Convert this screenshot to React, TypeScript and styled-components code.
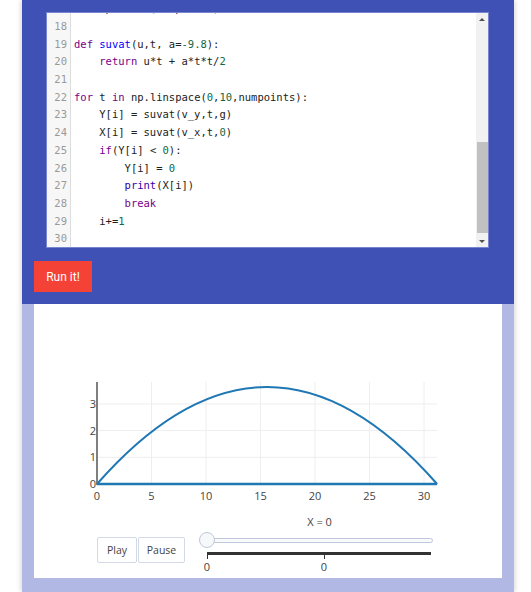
import React from "react";
import styled, { createGlobalStyle } from "styled-components";

const GlobalStyle = createGlobalStyle`
  html, body {
    margin: 0;
    padding: 0;
    background: #ffffff;
  }
  * {
    box-sizing: border-box;
  }
`;

type Token = { t: string; k?: "kw" | "def" | "num" | "builtin" };

// lines 17..30 of the editor; 17 sits half hidden above the top edge
const CODE: { n: number; tokens: Token[] }[] = [
  { n: 17, tokens: [{ t: "Y = np.zeros(numpoints)" }] },
  { n: 18, tokens: [] },
  {
    n: 19,
    tokens: [
      { t: "def", k: "kw" },
      { t: " " },
      { t: "suvat", k: "def" },
      { t: "(u,t, a=" },
      { t: "-9.8", k: "num" },
      { t: "):" },
    ],
  },
  {
    n: 20,
    tokens: [
      { t: "    " },
      { t: "return", k: "kw" },
      { t: " u*t + a*t*t/" },
      { t: "2", k: "num" },
    ],
  },
  { n: 21, tokens: [] },
  {
    n: 22,
    tokens: [
      { t: "for", k: "kw" },
      { t: " t " },
      { t: "in", k: "kw" },
      { t: " np.linspace(" },
      { t: "0", k: "num" },
      { t: "," },
      { t: "10", k: "num" },
      { t: ",numpoints):" },
    ],
  },
  { n: 23, tokens: [{ t: "    Y[i] = suvat(v_y,t,g)" }] },
  {
    n: 24,
    tokens: [{ t: "    X[i] = suvat(v_x,t," }, { t: "0", k: "num" }, { t: ")" }],
  },
  {
    n: 25,
    tokens: [
      { t: "    " },
      { t: "if", k: "kw" },
      { t: "(Y[i] < " },
      { t: "0", k: "num" },
      { t: "):" },
    ],
  },
  { n: 26, tokens: [{ t: "        Y[i] = " }, { t: "0", k: "num" }] },
  {
    n: 27,
    tokens: [{ t: "        " }, { t: "print", k: "builtin" }, { t: "(X[i])" }],
  },
  { n: 28, tokens: [{ t: "        " }, { t: "break", k: "kw" }] },
  { n: 29, tokens: [{ t: "    i+=" }, { t: "1", k: "num" }] },
  { n: 30, tokens: [] },
];

const TOKEN_COLORS: Record<string, string> = {
  kw: "#770088",
  def: "#0000ff",
  num: "#116644",
  builtin: "#3300aa",
};

// chart scales (panel coords)
const X0 = 63;
const Y0 = 180;
const XS = 10.9;
const YS = 26.7;
const px = (v: number) => X0 + v * XS;
const py = (u: number) => Y0 - u * YS;
const X_END = px(31.2);

const Page = styled.div`
  padding-left: 22px;
  width: 514px;
`;

const Card = styled.div`
  width: 492px;
  box-shadow: 0 0 6px rgba(0, 0, 0, 0.22);
`;

const EditorPanel = styled.div`
  background: #3f51b5;
  padding: 12px 25px 12px 24px;
`;

const Editor = styled.div`
  display: flex;
  height: 236px;
  background: #ffffff;
  border: 1px solid #7784cf;
  overflow: hidden;
`;

const CodeArea = styled.div`
  flex: 1;
  overflow: hidden;
`;

const Lines = styled.div`
  margin-top: -12.7px;
  font-family: "DejaVu Sans Mono", "Liberation Mono", monospace;
  font-size: 10.5px;
`;

const Line = styled.div`
  display: flex;
  height: 17.7px;
  line-height: 17.7px;
`;

const LineNo = styled.div`
  width: 24px;
  flex: none;
  background: #f7f7f7;
  border-right: 1px solid #dddddd;
  color: #999999;
  text-align: right;
  padding-right: 3px;
`;

const LineText = styled.div`
  padding-left: 3px;
  white-space: pre;
  color: #222222;
`;

const Tok = styled.span<{ $c?: string }>`
  color: ${({ $c }) => $c ?? "inherit"};
`;

const ScrollBar = styled.div`
  width: 12px;
  flex: none;
  display: flex;
  flex-direction: column;
  background: #f1f1f1;
`;

const ScrollArrow = styled.div<{ $down?: boolean }>`
  height: 12px;
  flex: none;
  display: flex;
  align-items: center;
  justify-content: center;

  &::after {
    content: "";
    width: 0;
    height: 0;
    border-left: 3px solid transparent;
    border-right: 3px solid transparent;
    ${({ $down }) =>
      $down ? "border-top: 3px solid #505050;" : "border-bottom: 3px solid #505050;"}
  }
`;

const ScrollTrack = styled.div`
  flex: 1;
  padding: 117px 0 0 1px;
`;

const ScrollThumb = styled.div`
  height: 91px;
  width: 11px;
  background: #c1c1c1;
`;

const RunButton = styled.button`
  display: block;
  margin: 13px 0 0 -12px;
  width: 58px;
  height: 31px;
  border: none;
  border-radius: 0;
  background: #f44336;
  color: #ffffff;
  font-family: Roboto, "Liberation Sans", sans-serif;
  font-size: 12px;
  padding: 0;
  cursor: pointer;
`;

const PlotPanel = styled.div`
  background: #b1b8e4;
  padding: 0 12px 14px;
`;

const PlotSheet = styled.div`
  background: #ffffff;
  height: 274px;
  display: flex;
  flex-direction: column;
`;

const ChartSvg = styled.svg`
  display: block;
  flex: none;
  font-family: "Open Sans", "Liberation Sans", sans-serif;
  font-size: 11px;
`;

const Controls = styled.div`
  display: flex;
  align-items: flex-start;
  padding-left: 63px;
  font-family: "Open Sans", "Liberation Sans", sans-serif;
  font-size: 11px;
  color: #444444;
`;

const ButtonGroup = styled.div`
  display: flex;
  gap: 1px;
  margin-top: 22px;
`;

const ControlButton = styled.button<{ $w: number }>`
  width: ${({ $w }) => $w}px;
  height: 26px;
  padding: 0;
  background: #ffffff;
  border: 1px solid #d4d9e8;
  border-radius: 2px;
  font-family: inherit;
  font-size: 10.5px;
  color: #444444;
`;

const SliderBlock = styled.div`
  width: 235px;
  margin-left: 14px;
`;

const SliderLabel = styled.div`
  height: 14px;
  line-height: 14px;
  text-align: center;
  padding-left: 6px;
`;

const TrackWrap = styled.div`
  position: relative;
  height: 20px;
  padding-top: 9px;
`;

const Track = styled.div`
  height: 5px;
  margin-left: 1px;
  width: 233px;
  background: #f8fafc;
  border: 1px solid #bec8d9;
  border-radius: 3px;
`;

const Handle = styled.div`
  position: absolute;
  left: 0;
  top: 3px;
  width: 16px;
  height: 16px;
  border-radius: 50%;
  background: #f6f8fa;
  border: 1px solid #bec8d9;
`;

const Rail = styled.div`
  margin: 3px 0 0 8px;
  width: 224px;
  height: 3px;
  background: #333333;
`;

const TickRow = styled.div`
  display: flex;
  margin-left: 8px;
`;

const Tick = styled.div`
  flex: none;
  width: 117px;
  height: 4px;
  border-left: 1px solid #333333;
`;

const TickLabel = styled.div`
  flex: none;
  width: 117px;
  margin-top: 1px;
  height: 14px;
  line-height: 14px;

  span {
    display: block;
    width: 20px;
    margin-left: -10px;
    text-align: center;
  }
`;

const Chart: React.FC = () => {
  const xTicks = [0, 5, 10, 15, 20, 25, 30];
  const yTicks = [1, 2, 3];
  const peakY = 83;
  const ctrlY = 2 * peakY - Y0;
  return (
    <ChartSvg width={468} height={211} viewBox="0 0 468 211">
      {xTicks.slice(1).map((v) => (
        <line key={v} x1={px(v)} x2={px(v)} y1={78} y2={Y0} stroke="#eeeeee" />
      ))}
      {yTicks.map((u) => (
        <line key={u} x1={X0} x2={X_END} y1={py(u)} y2={py(u)} stroke="#eeeeee" />
      ))}
      <line x1={X0} x2={X0} y1={78} y2={181} stroke="#7f7f7f" strokeWidth={2} />
      <path
        d={`M${X0},${Y0} Q${(X0 + X_END) / 2},${ctrlY} ${X_END},${Y0}`}
        fill="none"
        stroke="#1f77b4"
        strokeWidth={2}
      />
      <line x1={X0} x2={X_END} y1={Y0} y2={Y0} stroke="#1f77b4" strokeWidth={2.6} />
      {xTicks.map((v) => (
        <text key={v} x={px(v)} y={196} textAnchor="middle" fill="#444444">
          {v}
        </text>
      ))}
      {[0, ...yTicks].map((u) => (
        <text key={u} x={X0 - 1} y={py(u) + 4} textAnchor="end" fill="#444444">
          {u}
        </text>
      ))}
    </ChartSvg>
  );
};

const App: React.FC = () => {
  return (
    <>
      <GlobalStyle />
      <Page>
        <Card>
          <EditorPanel>
            <Editor>
              <CodeArea>
                <Lines>
                  {CODE.map((line) => (
                    <Line key={line.n}>
                      <LineNo>{line.n}</LineNo>
                      <LineText>
                        {line.tokens.map((tk, i) => (
                          <Tok key={i} $c={tk.k ? TOKEN_COLORS[tk.k] : undefined}>
                            {tk.t}
                          </Tok>
                        ))}
                      </LineText>
                    </Line>
                  ))}
                </Lines>
              </CodeArea>
              <ScrollBar>
                <ScrollArrow />
                <ScrollTrack>
                  <ScrollThumb />
                </ScrollTrack>
                <ScrollArrow $down />
              </ScrollBar>
            </Editor>
            <RunButton>Run it!</RunButton>
          </EditorPanel>
          <PlotPanel>
            <PlotSheet>
              <Chart />
              <Controls>
                <ButtonGroup>
                  <ControlButton $w={40}>Play</ControlButton>
                  <ControlButton $w={47}>Pause</ControlButton>
                </ButtonGroup>
                <SliderBlock>
                  <SliderLabel>X = 0</SliderLabel>
                  <TrackWrap>
                    <Track />
                    <Handle />
                  </TrackWrap>
                  <Rail />
                  <TickRow>
                    <Tick />
                    <Tick />
                  </TickRow>
                  <TickRow>
                    <TickLabel>
                      <span>0</span>
                    </TickLabel>
                    <TickLabel>
                      <span>0</span>
                    </TickLabel>
                  </TickRow>
                </SliderBlock>
              </Controls>
            </PlotSheet>
          </PlotPanel>
        </Card>
      </Page>
    </>
  );
};

export default App;
